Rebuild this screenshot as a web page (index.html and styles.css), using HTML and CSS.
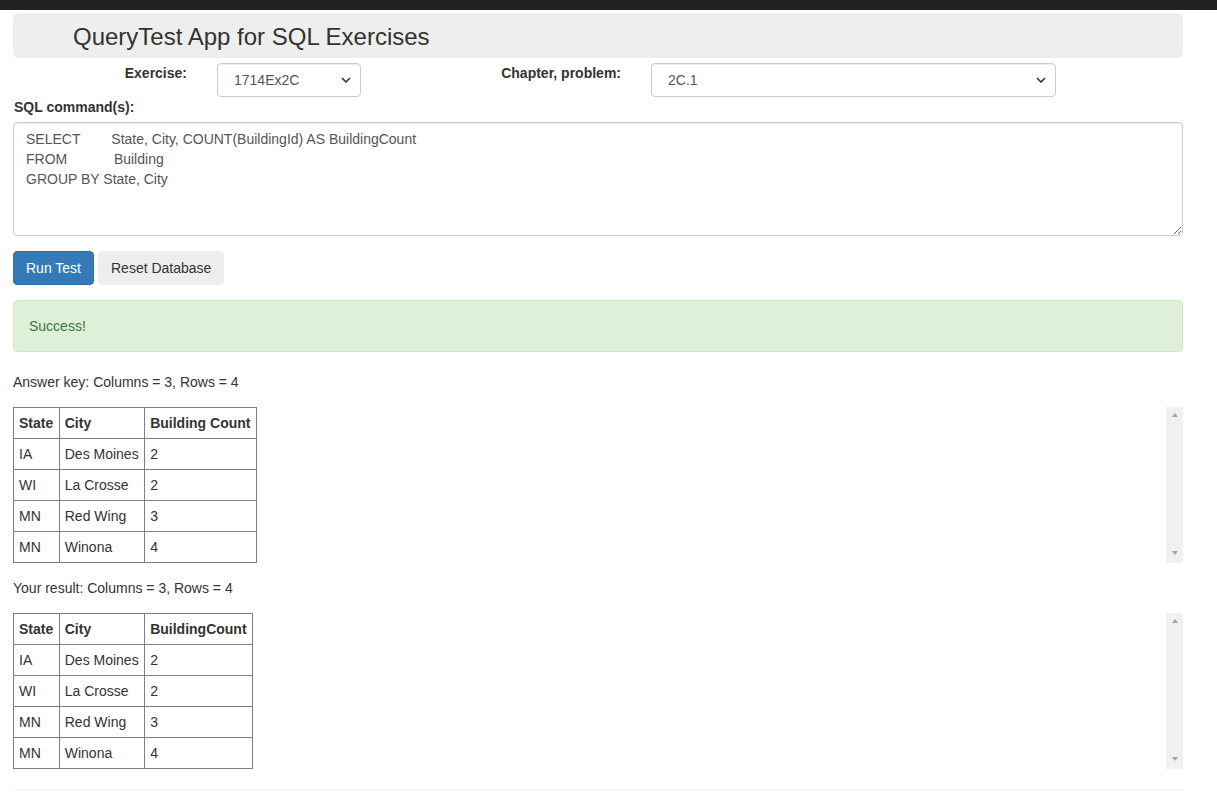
FILE: index.html
```html
<!DOCTYPE html>
<html>
<head>
<meta charset="utf-8">
<title>QueryTest App</title>
<link rel="stylesheet" href="styles.css">
</head>
<body>
<div class="topbar"></div>
<div class="container">
  <div class="header"><h1 class="title">QueryTest App for SQL Exercises</h1></div>
  <div class="pickrow">
    <label class="pick-label pick-label-ex">Exercise:</label>
    <select class="pick pick-ex"><option>1714Ex2C</option></select>
    <label class="pick-label pick-label-ch">Chapter, problem:</label>
    <select class="pick pick-ch"><option>2C.1</option></select>
  </div>
  <label class="sql-label">SQL command(s):</label>
  <textarea class="sql">SELECT        State, City, COUNT(BuildingId) AS BuildingCount
FROM            Building
GROUP BY State, City</textarea>
  <div class="buttons">
    <button class="btn btn-primary">Run Test</button>
    <button class="btn btn-default">Reset Database</button>
  </div>
  <div class="alert">Success!</div>

  <p class="caption">Answer key: Columns = 3, Rows = 4</p>
  <div class="scrollbox">
    <table class="result">
      <tr><th>State</th><th>City</th><th>Building Count</th></tr>
      <tr><td>IA</td><td>Des Moines</td><td>2</td></tr>
      <tr><td>WI</td><td>La Crosse</td><td>2</td></tr>
      <tr><td>MN</td><td>Red Wing</td><td>3</td></tr>
      <tr><td>MN</td><td>Winona</td><td>4</td></tr>
    </table>
    <div class="track"><span class="arrow-up"></span><span class="arrow-down"></span></div>
  </div>

  <p class="caption">Your result: Columns = 3, Rows = 4</p>
  <div class="scrollbox">
    <table class="result">
      <tr><th>State</th><th>City</th><th>BuildingCount</th></tr>
      <tr><td>IA</td><td>Des Moines</td><td>2</td></tr>
      <tr><td>WI</td><td>La Crosse</td><td>2</td></tr>
      <tr><td>MN</td><td>Red Wing</td><td>3</td></tr>
      <tr><td>MN</td><td>Winona</td><td>4</td></tr>
    </table>
    <div class="track"><span class="arrow-up"></span><span class="arrow-down"></span></div>
  </div>
  <hr class="rule">
</div>
</body>
</html>
```
FILE: styles.css
```css
html, body {
  margin: 0;
  padding: 0;
  background: #fff;
}
body {
  font-family: "Liberation Sans", Arial, Helvetica, sans-serif;
  font-size: 14px;
  line-height: 20px;
  color: #333;
}
.topbar {
  height: 10px;
  background: #222;
}
.container {
  width: 1170px;
  margin-left: 13px;
  padding-top: 3px;
}
.header {
  background: #eee;
  border-radius: 6px;
  height: 45px;
  display: flex;
  align-items: center;
  padding-left: 60px;
}
.title {
  margin: 0;
  font-size: 24px;
  font-weight: normal;
  line-height: 28px;
  color: #333;
  padding-top: 3px;
}
.pickrow {
  display: flex;
  align-items: flex-start;
  margin-top: 5px;
}
.pick-label {
  font-weight: bold;
  text-align: right;
  line-height: 20px;
}
.pick-label-ex {
  width: 174px;
}
.pick-label-ch {
  width: 260px;
}
.pick {
  -webkit-appearance: none;
  appearance: none;
  height: 34px;
  border: 1px solid #ccc;
  border-radius: 4px;
  background-color: #fff;
  background-image: url("data:image/svg+xml,%3Csvg xmlns='http://www.w3.org/2000/svg' width='10' height='6' viewBox='0 0 10 6'%3E%3Cpath d='M1 1l4 4 4-4' fill='none' stroke='%23333' stroke-width='1.6'/%3E%3C/svg%3E");
  background-repeat: no-repeat;
  background-position: right 9px center;
  font-family: "Liberation Sans", Arial, sans-serif;
  font-size: 14px;
  color: #555;
  padding: 6px 12px 6px 16px;
  box-shadow: inset 0 1px 1px rgba(0,0,0,.075);
}
.pick-ex {
  width: 144px;
  margin-left: 30px;
}
.pick-ch {
  width: 405px;
  margin-left: 30px;
}
.sql-label {
  display: block;
  font-weight: bold;
  margin-bottom: 5px;
  padding-left: 1px;
}
.sql {
  display: block;
  box-sizing: border-box;
  width: 1170px;
  height: 114px;
  margin: 0;
  border: 1px solid #ccc;
  border-radius: 4px;
  padding: 6px 12px;
  font-family: "Liberation Sans", Arial, sans-serif;
  font-size: 14px;
  line-height: 20px;
  color: #555;
  box-shadow: inset 0 1px 1px rgba(0,0,0,.075);
  resize: vertical;
}
.buttons {
  display: flex;
  gap: 4px;
  margin-top: 15px;
}
.btn {
  height: 34px;
  padding: 6px 12px;
  font-family: "Liberation Sans", Arial, sans-serif;
  font-size: 14px;
  line-height: 20px;
  border-radius: 4px;
  border: 1px solid transparent;
}
.btn-primary {
  background: #337ab7;
  border-color: #2e6da4;
  color: #fff;
}
.btn-default {
  background: #eee;
  border-color: #eee;
  color: #333;
}
.alert {
  margin-top: 15px;
  margin-bottom: 20px;
  padding: 15px;
  background: #dff0d8;
  border: 1px solid #d6e9c6;
  border-radius: 4px;
  color: #3c763d;
}
.caption {
  margin: 0 0 15px;
}
.scrollbox {
  display: flex;
  justify-content: space-between;
  align-items: flex-start;
  height: 156px;
  margin-bottom: 15px;
}
.track {
  box-sizing: border-box;
  width: 17px;
  height: 156px;
  background: #f1f1f1;
  padding: 6px 0 8px;
  display: flex;
  flex-direction: column;
  justify-content: space-between;
  align-items: center;
}
.arrow-up {
  width: 0;
  height: 0;
  border-left: 3.5px solid transparent;
  border-right: 3.5px solid transparent;
  border-bottom: 4px solid #a3a3a3;
}
.arrow-down {
  width: 0;
  height: 0;
  border-left: 3.5px solid transparent;
  border-right: 3.5px solid transparent;
  border-top: 4px solid #a3a3a3;
}
.result {
  border-collapse: collapse;
}
.result th, .result td {
  border: 1px solid #808080;
  padding: 5px 5.5px 5px 5px;
  text-align: left;
  line-height: 20px;
  white-space: nowrap;
}
.result th {
  font-weight: bold;
}
.rule {
  margin: 20px 0 0;
  border: 0;
  border-top: 1px solid #eee;
}
```
